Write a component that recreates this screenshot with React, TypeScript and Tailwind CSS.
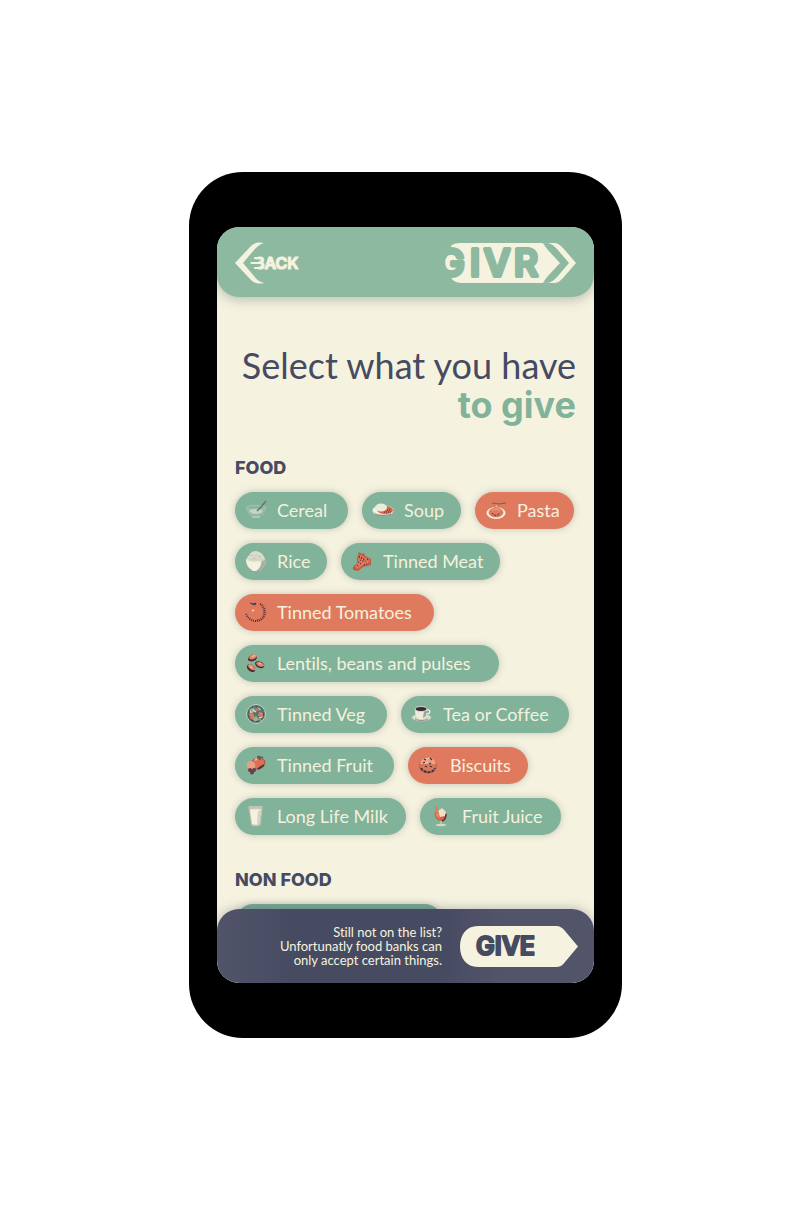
import { useState, type ReactNode } from "react";

type Item = { name: string; width: string; icon: ReactNode; on?: boolean };

const items: Item[] = [
  {
    name: "Cereal",
    width: "min-w-[113px]",
    icon: (
      <>
        <path d="M1 8c0 7 4 9 7 10h6c4-1 7-3 7-10z" fill="#92b9a6" />
        <ellipse cx="11" cy="8.500" rx="10" ry="2" fill="#8ab3a0" stroke="#b3cbba" strokeWidth=".7" />
        <path d="M4 12c4-3 10-3 14 0-2 4-12 4-14 0z" fill="#c8d3c0" />
        <path d="m12 12 4-4 5-6" stroke="#66756f" strokeWidth="1.500" />
        <path d="M7 18h8" stroke="#d3d9c8" />
      </>
    ),
  },
  {
    name: "Soup",
    width: "min-w-[99px]",
    icon: (
      <>
        <ellipse cx="11" cy="12.500" rx="10.500" ry="4.500" fill="#cdc8ba" />
        <ellipse cx="11" cy="11" rx="10.500" ry="4.500" fill="#f4f1de" />
        <ellipse cx="13" cy="11" rx="8" ry="4" fill="#d3654a" />
        <path d="M12 13h7M15 11h4" stroke="#712f2b" strokeDasharray="1 1" />
        <ellipse cx="9" cy="8.500" rx="6" ry="4" fill="#eeeada" />
        <path d="M3 15c4 2 12 2 16 0" stroke="#8d8880" fill="none" />
      </>
    ),
  },
  {
    name: "Pasta",
    width: "min-w-[99px]",
    on: true,
    icon: (
      <>
        <ellipse cx="11" cy="14" rx="9.500" ry="6" fill="#f4f1de" />
        <ellipse cx="11" cy="13.500" rx="7" ry="4.500" fill="#e07a5f" stroke="#c4634b" strokeWidth=".6" />
        <path d="M7 12c3-3 7-2 8 0" stroke="#f0b08c" fill="none" />
        <path d="M7 14c2 3 6 3 8 0" stroke="#432f3b" strokeDasharray="2 1" fill="none" />
        <path d="M10 9V5h3v4" fill="#e9a47f" stroke="#bc6548" strokeWidth=".7" />
        <path d="m7 4 7 1 7-1" stroke="#626775" strokeWidth="1.200" fill="none" />
      </>
    ),
  },
  {
    name: "Rice",
    width: "min-w-[92px]",
    icon: (
      <>
        <path d="M2 9c0-3 2-3 3-5 2-3 6-4 9-2 3 1 5 4 6 7z" fill="#dcdccd" />
        <path d="M1 9h20c0 7-4 9-6 12H8C4 18 1 16 1 9z" fill="#f4f1de" />
        <path d="M21 9c0 7-4 9-6 12h-4c5-3 5-7 6-12z" fill="#a7afa1" />
        <ellipse cx="11" cy="9.500" rx="9" ry="2" fill="#d4d7c6" />
        <path d="m6 6 2-1m2 1 2-1m1 2 3-1m-8 3 2-1" stroke="#b9beb0" />
      </>
    ),
  },
  {
    name: "Tinned Meat",
    width: "min-w-[159px]",
    icon: (
      <>
        <path d="m8 2 3 2 2-1 1 3 6 3v6l-8 2-5 4-5-1v-3l4-4V8z" fill="#c4583f" />
        <path d="m8 4 5 3 6 3-1 4-6 1-5 4-3-2 3-6z" fill="#e07a5f" />
        <path d="m8 6 5 3m3 0 2 2m-9-1 5 2m-7 0 3 2m-4 1 2 2M8 7l7 4m-2 4 5-2" stroke="#512e35" strokeDasharray="1 1.500" strokeWidth="1.200" />
      </>
    ),
  },
  {
    name: "Tinned Tomatoes",
    width: "min-w-[199px]",
    on: true,
    icon: (
      <>
        <path d="M15 3c8 4 6 17-4 17-5 0-8-3-10-7" stroke="#552f38" strokeWidth="2" strokeDasharray="1 1" fill="none" />
        <path d="M17 6c4 6 0 13-6 13" stroke="#753a39" strokeDasharray="1 1" fill="none" />
        <path d="m5 2 3 1 3-1-1 2-3-1" fill="#3b5f60" stroke="#3d405b" />
        <path d="m7 10 2-1" stroke="#f4d4b6" strokeWidth="1.500" />
      </>
    ),
  },
  {
    name: "Lentils, beans and pulses",
    width: "min-w-[264px]",
    icon: (
      <>
        <path d="M3 8c0-5 8-7 9-3 0 4-6 6-9 3z" fill="#4e2c35" />
        <path d="M10 11c2-4 11 0 9 4-3 3-9 0-9-4z" fill="#4e2c35" />
        <path d="M2 14c2-5 9 0 8 5-2 3-9-1-8-5z" fill="#4e2c35" />
        <path d="M4 6c1-4 8-5 8-2-1 3-6 5-8 2z" fill="#e2876b" />
        <path d="M11 11c3-3 9 1 8 3-3 2-7 0-8-3z" fill="#e2876b" />
        <path d="M3 13c3-3 7 2 7 5-3 1-7-2-7-5z" fill="#e2876b" />
        <path d="m7 5 3-2m4 8 2 1m-11 2 2 2" stroke="#f2bea1" strokeWidth="1.200" />
      </>
    ),
  },
  {
    name: "Tinned Veg",
    width: "min-w-[152px]",
    icon: (
      <>
        <circle cx="11" cy="11" r="9.500" fill="#5a7471" stroke="#c3d2c0" />
        <path d="m4 7 4-3 2 3-3 4zm8-3 5 2-3 2zM7 16l4-3 3 3-3 3z" fill="#9ab18e" />
        <path d="m4 11 4-1 2 5-4 1zM14 9l5 1-1 4-5-1zM10 5l3 1-2 3z" fill="#e07a5f" />
        <path d="m14 15 3-1m-9-7 3 2m-6-1 1 2m9 6 1 2" stroke="#eee6cf" strokeWidth="1.200" />
        <circle cx="11" cy="11" r="7.500" fill="none" stroke="#3d4a57" strokeDasharray="2 3" />
      </>
    ),
  },
  {
    name: "Tea or Coffee",
    width: "min-w-[168px]",
    icon: (
      <>
        <ellipse cx="10.500" cy="14.500" rx="10" ry="4" fill="#d7dbca" stroke="#93a79a" strokeWidth=".7" />
        <path d="M4 6h12c0 6-1 8-4 10H8c-3-2-4-4-4-10z" fill="#eeecda" />
        <path d="M13 8h3c0 4-2 6-4 7z" fill="#98a29a" />
        <ellipse cx="10" cy="6" rx="6" ry="2.500" fill="#392b37" stroke="#ecead6" strokeWidth=".8" />
        <path d="M16 7c4-1 4 4-1 4" stroke="#f4f1de" strokeWidth="1.200" fill="none" />
        <path d="M4 16c4 2 9 2 13 0" stroke="#8d9189" fill="none" />
      </>
    ),
  },
  {
    name: "Tinned Fruit",
    width: "min-w-[159px]",
    icon: (
      <>
        <path d="M8 6c4-3 10-2 12 1 0 6-5 9-9 8-4-1-6-6-3-9z" fill="#df6e52" stroke="#8e4239" strokeWidth=".7" />
        <path d="M2 9c3-4 7-2 8 1s-1 6-4 6-5-4-4-7z" fill="#e5a282" />
        <path d="M13 2c1 1 2 2 2 4m-3-3c3 0 5-1 6 1" stroke="#405955" strokeWidth="1.200" fill="none" />
        <path d="m10 6 2-1" stroke="#f4be9d" strokeWidth="2" />
        <g fill="#663d49">
          <circle cx="5" cy="16" r="2" />
          <circle cx="9" cy="16" r="2" />
          <circle cx="7" cy="18.500" r="2" />
        </g>
        <path d="m13 15 6-4" stroke="#45343b" strokeWidth="2" />
      </>
    ),
  },
  {
    name: "Biscuits",
    width: "min-w-[120px]",
    on: true,
    icon: (
      <>
        <ellipse cx="10" cy="11.500" rx="8.500" ry="7.500" fill="#d9775b" stroke="#a94d3e" strokeWidth=".6" />
        <path d="M3 7c2-4 11-5 14 0l1 3H2z" fill="#eba184" />
        <path d="m6 5 2 1m4-2 2 2m-9 3 2-1m4 2 2-1m-6 3 2 1m3-1 2 1" stroke="#413341" strokeWidth="1.200" />
        <path d="M3 14c2 5 12 6 14 0" stroke="#413341" strokeDasharray="3 1" strokeWidth="2" fill="none" />
        <path d="m8 5 3-1m-4 5 3-1" stroke="#f3c9a9" />
      </>
    ),
  },
  {
    name: "Long Life Milk",
    width: "min-w-[171px]",
    icon: (
      <>
        <path d="m3 1 3 19c1 2 9 2 10 0l2-19z" fill="#bdc7b8" />
        <path d="m5 5 2 14c1 1 6 1 7 0l2-14z" fill="#f4f1de" />
        <path d="m13 6 3-1-2 14-2 1z" fill="#d3d4c5" />
        <path d="M5 5c3-1 8-1 11 0" stroke="#eeeedd" fill="none" />
        <path d="m3 1 3 19c1 2 9 2 10 0l2-19c-3-1-12-1-15 0z" fill="none" stroke="#9aac9d" strokeWidth=".8" />
      </>
    ),
  },
  {
    name: "Fruit Juice",
    width: "min-w-[141px]",
    icon: (
      <>
        <path d="M5 7h11c1 5-1 8-5 9-5-1-7-4-6-9z" fill="#d3614a" />
        <path d="m8 6 4-3 4 4-1 4-5 1z" fill="#efe0c8" />
        <path d="m6 5 3 4 1 5-4-3z" fill="#e98466" />
        <path d="m6 1 2 8" stroke="#e07a5f" strokeWidth="2" />
        <path d="M16 9c0 4-1 6-4 7" stroke="#682e35" strokeWidth="1.500" fill="none" />
        <path d="M11 16v3" stroke="#d5d8c6" />
        <ellipse cx="11" cy="20" rx="5" ry="1.200" fill="#d5d8c6" />
      </>
    ),
  },
];

function Chip({ item }: { item: Item }) {
  const [on, setOn] = useState(!!item.on);
  return (
    <button
      type="button"
      aria-pressed={on}
      onClick={() => setOn(!on)}
      className={`flex h-[37px] items-center gap-2.5 rounded-full pr-3 pb-0.5 pl-2.5 text-[18px] leading-6 whitespace-nowrap text-[#f4f1de] shadow-[0_0_7px_rgba(61,64,91,0.28)] ${item.width} ${on ? "bg-[#e07a5f]" : "bg-[#81b29a]"}`}
    >
      <svg viewBox="0 0 22 22" className="size-[22px] shrink-0" fill="none" aria-hidden="true">
        {item.icon}
      </svg>
      {item.name}
    </button>
  );
}

function BackLink() {
  return (
    <a href="#back" aria-label="Back">
      <svg viewBox="0 0 68 42" className="h-[42px] w-[68px] overflow-visible">
        <path d="M0 21 16 4C20 0 25 0 29 1 25 2 22 5 19 8L8 21l11 13c3 4 6 6 10 7-4 1-9 1-13-3z" fill="#f5f3df" />
        <text x="19" y="27" fontFamily="Inter, sans-serif" fontWeight="600" fontSize="16" fill="#f5f3df" stroke="#f5f3df" strokeWidth="1.200" strokeLinejoin="round">
          BACK
        </text>
        <path d="M18 14h5.500v14H18z" fill="#8db9a1" />
        <path d="M20 16.200h6M16.500 21H27M20 26h6" stroke="#f5f3df" strokeWidth="2.200" strokeLinecap="round" />
      </svg>
    </a>
  );
}

function Logo() {
  return (
    <svg viewBox="0 0 140 42" className="h-[42px] w-[140px] overflow-visible" role="img" aria-label="GIVR">
      <path d="M15 4c3-3 7-3 12-3h77c6 0 9 2 13 6l13 14-13 14c-4 5-7 6-13 6H27c-5 0-9-1-12-5z" fill="#f5f3df" />
      <circle cx="19" cy="21" r="10.500" fill="#f5f3df" />
      <path d="M112 1h5c5 0 7 2 10 5l13 15-13 15c-3 3-5 5-10 5h-5c4-1 6-3 9-6l12-14-12-14c-3-3-5-5-9-6z" fill="#f5f3df" />
      <path d="M107 1c6 0 9 3 13 7l12 13-12 13c-4 4-7 7-13 7l13-20z" fill="#8db9a1" />
      <path d="M98 1c6 0 9 2 13 6l13 14-13 14c-4 4-7 6-13 6z" fill="#f5f3df" />
      <text x="1 34 48 78" y="34" fontFamily="Inter, sans-serif" fontWeight="500" fontSize="37" fill="#8db9a1" stroke="#8db9a1" strokeWidth="4" strokeLinejoin="round">
        GIVR
      </text>
    </svg>
  );
}

export default function App() {
  return (
    <div className="flex min-h-screen items-center justify-center bg-white font-[Lato,sans-serif] text-[#464a62] [font-variant-ligatures:none]">
      <div className="w-full max-w-[433px] rounded-[54px] bg-black px-7 py-[55px]">
        <div className="overflow-hidden rounded-[22px] bg-[#f5f3df]">
          <header className="flex items-center justify-between rounded-[22px] bg-[#8db9a1] px-[18px] pt-[15px] pb-[13px] shadow-[0_3px_12px_rgba(61,64,91,0.3)]">
            <BackLink />
            <Logo />
          </header>

          <main className="px-[18px] pt-12">
            <h1 className="text-right text-[36px] leading-10">
              Select what you have
              <strong className="block font-[Inter,sans-serif] font-bold text-[#81b29a]">to give</strong>
            </h1>
            <h2 className="mt-[31px] font-[Inter,sans-serif] text-[18px] leading-6 font-extrabold">FOOD</h2>
            <div className="mt-3 flex flex-wrap gap-3.5">
              {items.map((item) => (
                <Chip key={item.name} item={item} />
              ))}
            </div>
            <h2 className="mt-[33px] font-[Inter,sans-serif] text-[18px] leading-6 font-extrabold">NON FOOD</h2>
            <div aria-hidden="true" className="mt-3 h-[37px] w-[208px] rounded-full bg-[#78a993] shadow-[0_0_7px_rgba(61,64,91,0.28)]" />
          </main>

          <footer className="relative -mt-8 flex items-center justify-end gap-[18px] rounded-[22px] bg-[linear-gradient(90deg,#515469,#474b62_20%,#474b62_60%,#525469_75%)] px-4 py-4 shadow-[0_0_12px_rgba(61,64,91,0.35)]">
            <p className="text-right text-[13px] leading-[14px] text-[#f5f3df]">
              Still not on the list?
              <br />
              Unfortunatly food banks can
              <br />
              only accept certain things.
            </p>
            <button type="button" aria-label="Give" className="shrink-0">
              <svg viewBox="0 0 118 41" className="h-[41px] w-[118px]">
                <path d="M18 0h78c4 0 7 2 9 5l13 15.500L105 36c-2 3-5 5-9 5H18C6 41 0 32 0 20.500S6 0 18 0z" fill="#f5f3df" />
                <text x="16" y="29" fontFamily="Inter, sans-serif" fontWeight="600" fontSize="25" fill="#474b62" stroke="#474b62" strokeWidth="2.200" strokeLinejoin="round">
                  GIVE
                </text>
              </svg>
            </button>
          </footer>
        </div>
      </div>
    </div>
  );
}
